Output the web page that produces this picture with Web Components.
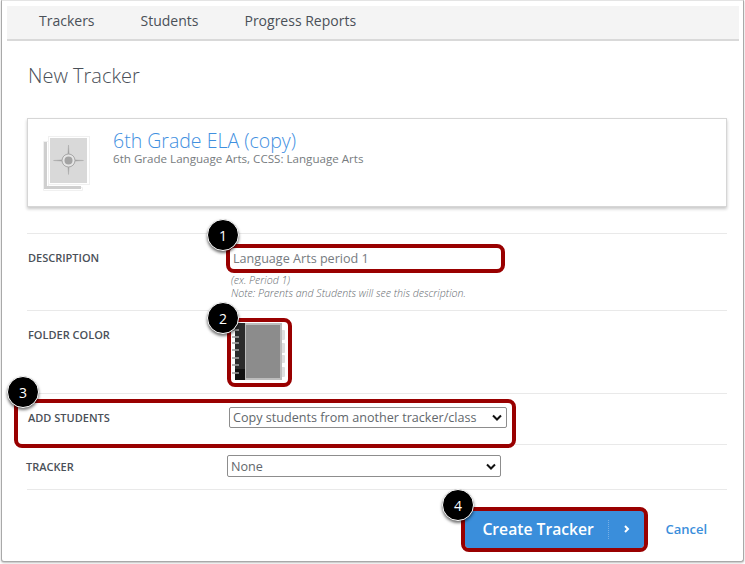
<!DOCTYPE html>
<html>
<head>
<meta charset="utf-8">
<title>New Tracker</title>
<style>
  html, body { margin: 0; padding: 0; background: #fff; }
  body { font-family: "Open Sans", sans-serif; width: 745px; height: 564px; overflow: hidden; }
</style>
</head>
<body>
<tracker-window>
  <top-nav slot="nav"></top-nav>
  <tracker-card></tracker-card>
  <form-row label="DESCRIPTION" height="77" pad="9" field="200" top="17">
    <description-field></description-field>
  </form-row>
  <form-row label="FOLDER COLOR" height="83" pad="12" field="201" top="17">
    <folder-swatch></folder-swatch>
  </form-row>
  <form-row label="ADD STUDENTS" height="51" pad="13" field="202" top="17">
    <native-select text="Copy students from another tracker/class" width="278" height="21"></native-select>
  </form-row>
  <form-row label="TRACKER" height="45" pad="10" field="200" top="15" shift="-2">
    <native-select text="None" width="274" height="22"></native-select>
  </form-row>
  <form-actions></form-actions>
  <red-box style="left:224px;top:243px;width:279px;height:29px"></red-box>
  <red-box style="left:225px;top:317px;width:65px;height:69px"></red-box>
  <red-box style="left:12px;top:398px;width:502px;height:49px"></red-box>
  <red-box style="left:459px;top:506px;width:187px;height:45px"></red-box>
  <step-badge style="left:205px;top:218px">1</step-badge>
  <step-badge style="left:205px;top:301px">2</step-badge>
  <step-badge style="left:5px;top:375px">3</step-badge>
  <step-badge style="left:440px;top:488px">4</step-badge>
</tracker-window>
<script>
function simple(name, html) {
  customElements.define(name, class extends HTMLElement {
    connectedCallback() {
      if (this.shadowRoot) return;
      this.attachShadow({ mode: 'open' });
      this.shadowRoot.innerHTML = typeof html === 'function' ? html(this) : html;
    }
  });
}

simple('tracker-window', `
  <style>
    :host {
      display: block; position: relative; box-sizing: border-box;
      width: 743px; height: 562px; margin-left: 1px;
      border: 1px solid #a9a9a9; border-top: 1px solid #e4e4e4; border-radius: 0 0 3px 3px;
      box-shadow: 0 1px 2px rgba(0,0,0,.25);
      background: #fff; padding-top: 5px;
    }
    .body { padding: 0 16px 0 25px; }
  </style>
  <slot name="nav"></slot>
  <div class="body"><slot></slot></div>
`);

simple('top-nav', `
  <style>
    :host {
      display: flex; box-sizing: border-box; height: 35px; margin: 0 4px 0 5px;
      background: #f4f4f4; border-bottom: 2px solid #d9d9d9;
      align-items: center; padding: 0 0 5px 32px; gap: 46px;
      font-size: 14px; color: #4a5058;
    }
  </style>
  <span>Trackers</span><span>Students</span><span>Progress Reports</span>
`);

simple('tracker-card', `
  <style>
    :host { display: block; padding: 21px 0 26px; border-bottom: 1px solid #e9e9e9; }
    h1 { margin: 0 0 29px 1px; font-size: 20px; line-height: 27px; font-weight: 300; color: #4a5058; }
    .card {
      box-sizing: border-box; height: 89px; display: flex; gap: 22px;
      background: #fff; border: 1px solid #d6d6d6;
      box-shadow: 0 2px 3px rgba(0,0,0,.22); padding: 16px 0 0 13px;
    }
    .name { font-size: 19.5px; line-height: 20px; font-weight: 300; color: #3f90df; margin-top: -4px; }
    .sub { font-size: 11.6px; line-height: 15px; color: #777c80; }
    svg { display: block; flex: none; }
  </style>
  <h1>New Tracker</h1>
  <div class="card">
    <svg width="50" height="60" viewBox="0 0 50 60">
      <path d="M2.500 6.500h5v46h34v3h-39z" fill="#fff" stroke="#f0f0f0"/>
      <path d="M3 7v47h37v-3H6V7z" fill="#cfcfcf"/>
      <rect x="7.500" y="1.500" width="41" height="48" fill="#fff" stroke="#f0f0f0"/>
      <rect x="9" y="3" width="37" height="45" fill="#d9d9d9"/>
      <path d="M27.500 10l1 14.500 14 1-14 1-1 13-1-13-14-1 14-1z" fill="#9c9c9c" stroke="#a8a8a8" stroke-width=".5"/>
      <circle cx="27.500" cy="25.500" r="6.500" fill="#e4e4e4" stroke="#a8a8a8" stroke-width="1"/>
      <circle cx="27.500" cy="25.500" r="4" fill="#a3a3a3"/>
    </svg>
    <div>
      <div class="name">6th Grade ELA (copy)</div>
      <div class="sub">6th Grade Language Arts, CCSS: Language Arts</div>
    </div>
  </div>
`);

simple('form-row', el => {
  const shift = Number(el.getAttribute('shift') || 0);
  return `
  <style>
    :host {
      display: flex; box-sizing: border-box; border-bottom: 1px solid #e9e9e9;
      height: ${el.getAttribute('height')}px;
    }
    label {
      width: ${Number(el.getAttribute('field')) - shift}px; flex: none; font-size: 11px; font-weight: 600;
      color: #4a5058; line-height: 14px; box-sizing: border-box;
      margin-left: ${shift}px; padding: ${el.getAttribute('top')}px 0 0 1px;
    }
    .field { flex: 1; padding-top: ${el.getAttribute('pad')}px; min-width: 0; }
  </style>
  <label>${el.getAttribute('label')}</label>
  <div class="field"><slot></slot></div>
`;
});

simple('description-field', `
  <style>
    :host { display: block; }
    .value { box-sizing: border-box; height: 24px; padding: 7px 0 0 6px; font-size: 12.6px; line-height: 17px; color: #767b80; }
    .note { margin: 7px 0 0 4px; font-size: 10.6px; font-style: italic; font-weight: 300; line-height: 13px; color: #666b70; }
  </style>
  <div class="value">Language Arts period 1</div>
  <div class="note">(ex. Period 1)<br>Note: Parents and Students will see this description.</div>
`);

simple('native-select', el => `
  <style>
    :host {
      display: flex; align-items: center; justify-content: space-between; box-sizing: border-box;
      width: ${el.getAttribute('width')}px; height: ${el.getAttribute('height')}px; padding: 0 4px 0 3px;
      border: 1px solid #8d8d8d; border-radius: 2px; background: #fff;
      font-size: 12.6px; color: #62676c;
    }
    svg { flex: none; }
  </style>
  <span>${el.getAttribute('text')}</span>
  <svg width="10" height="7" viewBox="0 0 10 7"><path d="M1 1.500l4 4 4-4" fill="none" stroke="#111" stroke-width="2"/></svg>
`);

simple('folder-swatch', `
  <style>:host { display: block; } svg { display: block; }</style>
  <svg width="58" height="58" viewBox="0 0 58 58">
    <rect x="53" y="7" width="4" height="10" rx="1" fill="#dedede"/>
    <rect x="53" y="20" width="4" height="10" rx="1" fill="#dedede"/>
    <rect x="53" y="32" width="4" height="8" rx="1" fill="#dedede"/>
    <rect x="53" y="44" width="4" height="10" rx="1" fill="#dedede"/>
    <rect x="7" y="0" width="10" height="57" fill="#2b2b2b"/>
    <rect x="7" y="46" width="10" height="11" fill="#111"/>
    <rect x="17" y="0" width="37" height="57" fill="#bdbdbd"/>
    <rect x="18" y="2" width="34" height="53" fill="#8c8c8c"/>
    <path d="M4 7h3M4 14h3M4 20h3M4 27h3M4 35h3M4 42h3M4 50h3" fill="none" stroke="#9a9a9a" stroke-width="1.500"/>
    <path d="M7 7h4M7 14h4M7 20h4M7 27h4M7 35h4M7 42h4M7 50h4" fill="none" stroke="#e6e6e6" stroke-width="1.200"/>
  </svg>
`);

simple('form-actions', `
  <style>
    :host { display: flex; justify-content: flex-end; align-items: center; gap: 21px; padding: 20px 20px 0 0; }
    .btn {
      display: flex; align-items: center; box-sizing: border-box; height: 38px; width: 179px;
      background: #3a8edb; border-radius: 4px; color: #fff; font-weight: 600; font-size: 15.7px;
      padding-left: 17px;
    }
    .txt { width: 126px; }
    .sep { width: 1px; height: 19px; border-left: 1px dotted #78b0e6; }
    .arrow { margin-left: 14px; display: block; }
    .cancel { font-size: 13px; font-weight: 600; color: #3a8edb; }
  </style>
  <div class="btn"><span class="txt">Create Tracker</span><span class="sep"></span>
    <svg class="arrow" width="6" height="8" viewBox="0 0 6 8"><path d="M1 1l3 3-3 3" fill="none" stroke="#fff" stroke-width="2"/></svg>
  </div>
  <span class="cancel">Cancel</span>
`);

simple('red-box', `
  <style>
    :host {
      display: block; position: absolute; box-sizing: border-box;
      border: 4px solid #990000; border-radius: 8px; pointer-events: none;
    }
  </style>
`);

simple('step-badge', `
  <style>
    :host {
      display: flex; position: absolute; width: 32px; height: 32px; box-sizing: border-box;
      align-items: center; justify-content: center; border-radius: 50%;
      background: #000; border: 1px solid #fff; color: #fff; font-size: 14px;
      box-shadow: 0 2px 3px rgba(0,0,0,.55);
    }
  </style>
  <slot></slot>
`);
</script>
</body>
</html>
